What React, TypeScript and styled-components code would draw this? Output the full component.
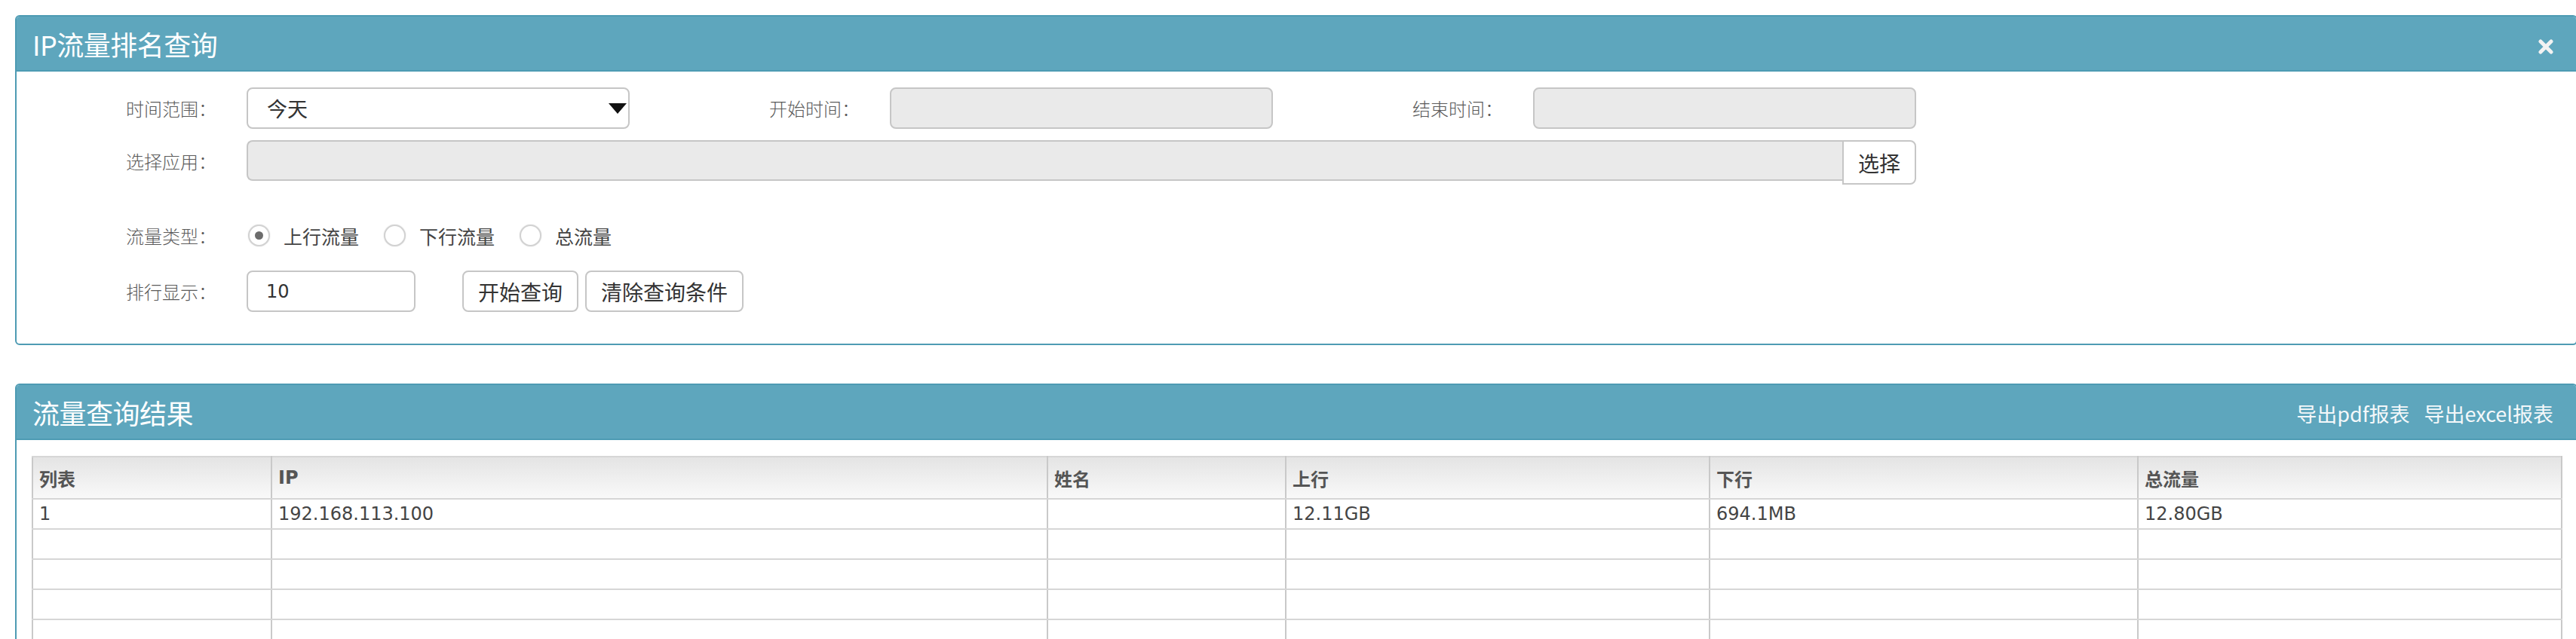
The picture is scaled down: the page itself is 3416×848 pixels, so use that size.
import React from "react";
import styled, { createGlobalStyle } from "styled-components";

const GlobalStyle = createGlobalStyle`
  html, body {
    margin: 0;
    padding: 0;
    height: 848px;
    overflow: hidden;
    background: #fff;
  }
  body {
    font-family: "DejaVu Sans", "Noto Sans CJK SC", sans-serif;
    color: #444;
  }
`;

const Page = styled.div`
  padding: 20px 0 0 20px;
  width: 3398px;
`;

const Panel = styled.section<{ $mt?: number }>`
  margin-top: ${(p) => p.$mt ?? 0}px;
  border: 2px solid #4e9bb3;
  border-radius: 6px;
  overflow: hidden;
  background: #fff;
`;

const PanelHeader = styled.header`
  display: flex;
  align-items: center;
  justify-content: space-between;
  height: 71px;
  padding: 0 30px 0 21px;
  background: #5ea6bd;
  border-bottom: 2px solid #4e9bb3;
  color: #fff;
  font-family: "Noto Sans CJK SC", sans-serif;
`;

const PanelTitle = styled.h2`
  margin: 0;
  font-size: 36px;
  font-weight: 400;
  letter-spacing: -0.5px;
`;

const CloseBtn = styled.span`
  display: flex;
  margin-top: 8px;
`;

const HeaderActions = styled.div`
  display: flex;
  gap: 19px;
  margin-top: 4px;
  font-size: 27px;
  color: #f4f8fa;
`;

const FormBody = styled.div`
  padding: 21px 0 42px 0;
`;

const FormRow = styled.div<{ $mt?: number }>`
  display: grid;
  grid-template-columns: 305px 508px 345px 508px 345px 508px;
  align-items: center;
  margin-top: ${(p) => p.$mt ?? 0}px;
  min-height: 55px;
`;

const Label = styled.label`
  justify-self: end;
  padding-right: 40px;
  font-family: "Noto Sans CJK SC", sans-serif;
  font-size: 24px;
  color: #5a5a5a;
  font-weight: 300;
`;

const SelectBox = styled.div`
  box-sizing: border-box;
  display: flex;
  align-items: center;
  justify-content: space-between;
  height: 55px;
  padding: 0 2px 0 25px;
  border: 2px solid #c6c6c6;
  border-radius: 8px;
  background: #fff;
  font-family: "Noto Sans CJK SC", sans-serif;
  font-size: 27px;
  color: #333;
`;

const Field = styled.div<{ $w?: number; $disabled?: boolean }>`
  box-sizing: border-box;
  display: flex;
  align-items: center;
  width: ${(p) => (p.$w ? `${p.$w}px` : "100%")};
  height: 55px;
  padding-left: 24px;
  border: 2px solid #c6c6c6;
  border-radius: 8px;
  background: ${(p) => (p.$disabled ? "#eaeaea" : "#fff")};
  font-size: 24px;
  color: #333;
`;

const InputGroup = styled.div`
  grid-column: 2 / 7;
  display: flex;
  align-items: flex-start;
  height: 55px;
`;

const GroupField = styled.div`
  box-sizing: border-box;
  flex: 1;
  height: 54px;
  border: 2px solid #c6c6c6;
  border-right: none;
  border-radius: 8px 0 0 8px;
  background: #eaeaea;
`;

const Button = styled.button<{ $attached?: boolean }>`
  box-sizing: border-box;
  height: ${(p) => (p.$attached ? 59 : 55)}px;
  padding: 0 19px;
  border: 2px solid #c6c6c6;
  border-radius: ${(p) => (p.$attached ? "0 8px 8px 0" : "8px")};
  background: #fff;
  font-family: "Noto Sans CJK SC", sans-serif;
  font-size: 28px;
  color: #333;
  cursor: pointer;
`;

const RadioGroup = styled.div`
  grid-column: 2 / 7;
  display: flex;
  align-items: center;
  padding-left: 2px;
`;

const RadioItem = styled.label`
  display: flex;
  align-items: center;
  gap: 18px;
  margin-right: 33px;
  font-family: "Noto Sans CJK SC", sans-serif;
  font-size: 25px;
  color: #444;
`;

const RadioCircle = styled.span<{ $checked?: boolean }>`
  box-sizing: border-box;
  display: flex;
  align-items: center;
  justify-content: center;
  width: 29px;
  height: 29px;
  border: 2px solid #d2d2d2;
  border-radius: 50%;
  box-shadow: 0 0 2px rgba(0, 0, 0, 0.12);
  background: #fff;
  &::after {
    content: "";
    width: 11px;
    height: 11px;
    border-radius: 50%;
    background: ${(p) => (p.$checked ? "#6c6c6c" : "transparent")};
  }
`;

const Controls = styled.div`
  grid-column: 2 / 7;
  display: flex;
  align-items: center;
`;

const ButtonBar = styled.div`
  display: flex;
  gap: 9px;
  margin-left: 62px;
`;

const TableWrap = styled.div`
  padding: 21px 20px 0 20px;
`;

const Table = styled.table`
  width: 3354px;
  border-collapse: collapse;
  table-layout: fixed;
  font-size: 24px;
  color: #444;
  th,
  td {
    border-top: 2px solid #d6d6d6;
    border-bottom: 2px solid #d6d6d6;
    border-left: 2px solid #c9c9c9;
    border-right: 2px solid #c9c9c9;
    padding: 0 8px;
    text-align: left;
    white-space: nowrap;
  }
`;

const HeadCell = styled.th`
  height: 54px;
  background: linear-gradient(#e4e4e4, #f9f9f9);
  font-weight: 700;
  color: #555;
`;

const Cell = styled.td`
  height: 38px;
`;

const columns = ["列表", "IP", "姓名", "上行", "下行", "总流量"];
const colWidths = [317, 1029, 316, 562, 568, 562];
const rows = [
  ["1", "192.168.113.100", "", "12.11GB", "694.1MB", "12.80GB"],
  ["", "", "", "", "", ""],
  ["", "", "", "", "", ""],
  ["", "", "", "", "", ""],
  ["", "", "", "", "", ""],
  ["", "", "", "", "", ""],
];

const CloseIcon = () => (
  <svg width="20" height="20" viewBox="0 0 20 20">
    <path d="M3 3 L17 17 M17 3 L3 17" stroke="#f2f2f2" strokeWidth="5" strokeLinecap="round" />
  </svg>
);

const CaretDown = () => (
  <svg width="24" height="14" viewBox="0 0 24 14">
    <path d="M0 0 H24 L12 14 Z" fill="#111" />
  </svg>
);

const App = () => {
  return (
    <>
      <GlobalStyle />
      <Page>
        <Panel>
          <PanelHeader>
            <PanelTitle>IP流量排名查询</PanelTitle>
            <CloseBtn>
              <CloseIcon />
            </CloseBtn>
          </PanelHeader>
          <FormBody>
            <FormRow>
              <Label>时间范围：</Label>
              <SelectBox>
                <span>今天</span>
                <CaretDown />
              </SelectBox>
              <Label>开始时间：</Label>
              <Field $disabled />
              <Label>结束时间：</Label>
              <Field $disabled />
            </FormRow>
            <FormRow $mt={15}>
              <Label>选择应用：</Label>
              <InputGroup>
                <GroupField />
                <Button $attached>选择</Button>
              </InputGroup>
            </FormRow>
            <FormRow $mt={44}>
              <Label>流量类型：</Label>
              <RadioGroup>
                <RadioItem>
                  <RadioCircle $checked />
                  上行流量
                </RadioItem>
                <RadioItem>
                  <RadioCircle />
                  下行流量
                </RadioItem>
                <RadioItem>
                  <RadioCircle />
                  总流量
                </RadioItem>
              </RadioGroup>
            </FormRow>
            <FormRow $mt={19}>
              <Label>排行显示：</Label>
              <Controls>
                <Field $w={224}>10</Field>
                <ButtonBar>
                  <Button>开始查询</Button>
                  <Button>清除查询条件</Button>
                </ButtonBar>
              </Controls>
            </FormRow>
          </FormBody>
        </Panel>

        <Panel $mt={51}>
          <PanelHeader>
            <PanelTitle>流量查询结果</PanelTitle>
            <HeaderActions>
              <span>导出pdf报表</span>
              <span>导出excel报表</span>
            </HeaderActions>
          </PanelHeader>
          <TableWrap>
            <Table>
              <colgroup>
                {colWidths.map((w, i) => (
                  <col key={i} style={{ width: w }} />
                ))}
              </colgroup>
              <thead>
                <tr>
                  {columns.map((c) => (
                    <HeadCell key={c}>{c}</HeadCell>
                  ))}
                </tr>
              </thead>
              <tbody>
                {rows.map((r, i) => (
                  <tr key={i}>
                    {r.map((v, j) => (
                      <Cell key={j}>{v}</Cell>
                    ))}
                  </tr>
                ))}
              </tbody>
            </Table>
          </TableWrap>
        </Panel>
      </Page>
    </>
  );
};

export default App;
